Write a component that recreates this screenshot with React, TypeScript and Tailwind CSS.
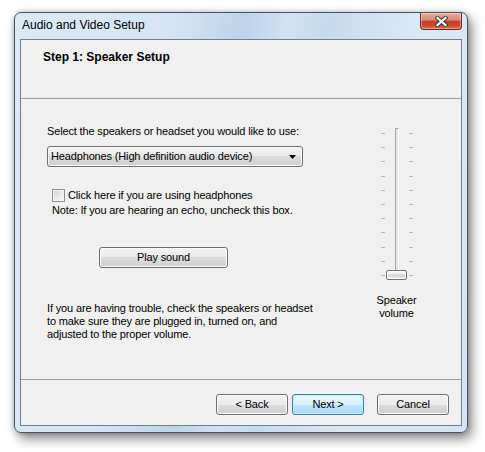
const ticks = Array.from({ length: 11 });

function VistaButton({ label, primary }: { label: string; primary?: boolean }) {
  return (
    <div
      className={
        primary
          ? 'w-[72px] h-[21px] rounded-[3px] border border-[#3c7fb1] bg-[linear-gradient(to_bottom,#eaf6fd_0%,#d9f0fc_50%,#bee6fd_50%,#a7d9f5_100%)] shadow-[inset_0_0_0_1px_#c8ecfd] flex items-center justify-center'
          : 'w-[72px] h-[21px] rounded-[3px] border border-[#707070] bg-[linear-gradient(to_bottom,#f2f2f2_0%,#ebebeb_50%,#dddddd_50%,#cfcfcf_100%)] shadow-[inset_0_0_0_1px_#fbfbfb] flex items-center justify-center'
      }
    >
      {label}
    </div>
  );
}

function CloseButton() {
  return (
    <div className="w-[42px] h-[17px] rounded-b-[4px] border border-t-0 border-[#6d2a20] bg-[linear-gradient(to_bottom,#e8ab9d_0%,#d98a78_45%,#c2402a_50%,#c9472f_75%,#e0704a_100%)] shadow-[inset_0_0_0_1px_rgba(255,220,210,0.45)] flex items-center justify-center">
      <svg width="13" height="11" viewBox="0 0 13 11">
        <path d="M2.5 2 L10.5 9 M10.5 2 L2.5 9" stroke="#3a3a3a" strokeWidth="4.2" strokeLinecap="square" />
        <path d="M2.5 2 L10.5 9 M10.5 2 L2.5 9" stroke="#ffffff" strokeWidth="2.2" strokeLinecap="square" />
      </svg>
    </div>
  );
}

function Slider() {
  return (
    <div className="relative w-[33px] h-[153px]">
      <div className="absolute left-[15px] top-0 w-[4px] h-[148px] border-l border-t border-[#a5a5a5] border-r border-r-white bg-[#e4e6e6]" />
      <div className="absolute left-[1px] top-[5px] h-[143px] flex flex-col justify-between">
        {ticks.map((_, i) => (
          <div key={i} className="w-[4px] h-px bg-[#b9b9b9]" />
        ))}
      </div>
      <div className="absolute left-[29px] top-[5px] h-[143px] flex flex-col justify-between">
        {ticks.map((_, i) => (
          <div key={i} className="w-[4px] h-px bg-[#b9b9b9]" />
        ))}
      </div>
      <div className="absolute left-[6px] top-[142px] w-[21px] h-[10px] rounded-[2px] border border-[#707070] bg-[linear-gradient(to_bottom,#fbfbfb_0%,#f0f0f0_40%,#d8d8d8_45%,#e6e6e6_100%)] shadow-[inset_0_0_0_1px_#ffffff]" />
    </div>
  );
}

export default function App() {
  return (
    <div className="w-[485px] h-[452px] bg-white pt-[12px] pl-[14px] font-['Liberation_Sans',Arial,sans-serif] text-black">
      <div className="w-[454px] h-[421px] rounded-[7px] border border-[#4a5461] bg-[linear-gradient(100deg,#dce9f6_0%,#d6e5f5_30%,#bdd3ea_44%,#d0e1f3_52%,#c6daee_60%,#dceaf7_78%,#d4e4f4_100%)] shadow-[4px_6px_12px_rgba(0,0,0,0.45),0_0_5px_rgba(0,0,0,0.25)] flex flex-col px-[5px] pb-[6px]">
        <div className="h-[26px] flex items-start justify-between">
          <span className="pl-[2px] pt-[4px] text-[12px] leading-[16px]">Audio and Video Setup</span>
          <CloseButton />
        </div>

        <div className="flex-1 border border-[#75808c] bg-[#f0f0f0] flex flex-col text-[11px] leading-[13px] tracking-[-0.15px]">
          <div className="h-[59px] border-b border-[#a0a0a0] pl-[22px] pt-[10px]">
            <span className="text-[12px] leading-[14px] font-bold tracking-normal">Step 1: Speaker Setup</span>
          </div>

          <div className="h-[281px] border-b border-[#a0a0a0] flex">
            <div className="w-[326px] pl-[26px] pt-[26px] flex flex-col items-start">
              <div>Select the speakers or headset you would like to use:</div>
              <div className="mt-[8px] w-[256px] h-[21px] rounded-[3px] border border-[#707070] bg-[linear-gradient(to_bottom,#f2f2f2_0%,#ebebeb_50%,#dddddd_50%,#cfcfcf_100%)] shadow-[inset_0_0_0_1px_#fbfbfb] flex items-center justify-between pl-[3px] pr-[6px]">
                <span>Headphones (High definition audio device)</span>
                <svg width="7" height="4" viewBox="0 0 7 4">
                  <path d="M0 0 H7 L3.5 4 Z" fill="#000000" />
                </svg>
              </div>
              <div className="mt-[22px] ml-[5px] flex items-center h-[13px]">
                <div className="w-[13px] h-[13px] border border-[#8e8f8f] bg-[linear-gradient(135deg,#d0d0d0_0%,#ececec_60%,#fbfbfb_100%)] shadow-[inset_0_0_0_1px_#f4f4f4]" />
                <span className="ml-[3px]">Click here if you are using headphones</span>
              </div>
              <div className="mt-[2px] ml-[5px]">Note: If you are hearing an echo, uncheck this box.</div>
              <div className="mt-[30px] ml-[52px] w-[129px] h-[21px] rounded-[3px] border border-[#707070] bg-[linear-gradient(to_bottom,#f2f2f2_0%,#ebebeb_50%,#dddddd_50%,#cfcfcf_100%)] shadow-[inset_0_0_0_1px_#fbfbfb] flex items-center justify-center">
                Play sound
              </div>
              <div className="mt-[34px]">
                If you are having trouble, check the speakers or headset
                <br />
                to make sure they are plugged in, turned on, and
                <br />
                adjusted to the proper volume.
              </div>
            </div>

            <div className="w-[99px] pt-[29px] flex flex-col items-center">
              <Slider />
              <div className="mt-[13px] text-center">
                Speaker
                <br />
                volume
              </div>
            </div>
          </div>

          <div className="flex-1 flex justify-end items-start pt-[14px] pr-[12px]">
            <VistaButton label="< Back" />
            <div className="ml-[4px]">
              <VistaButton label="Next >" primary />
            </div>
            <div className="ml-[13px]">
              <VistaButton label="Cancel" />
            </div>
          </div>
        </div>
      </div>
    </div>
  );
}
